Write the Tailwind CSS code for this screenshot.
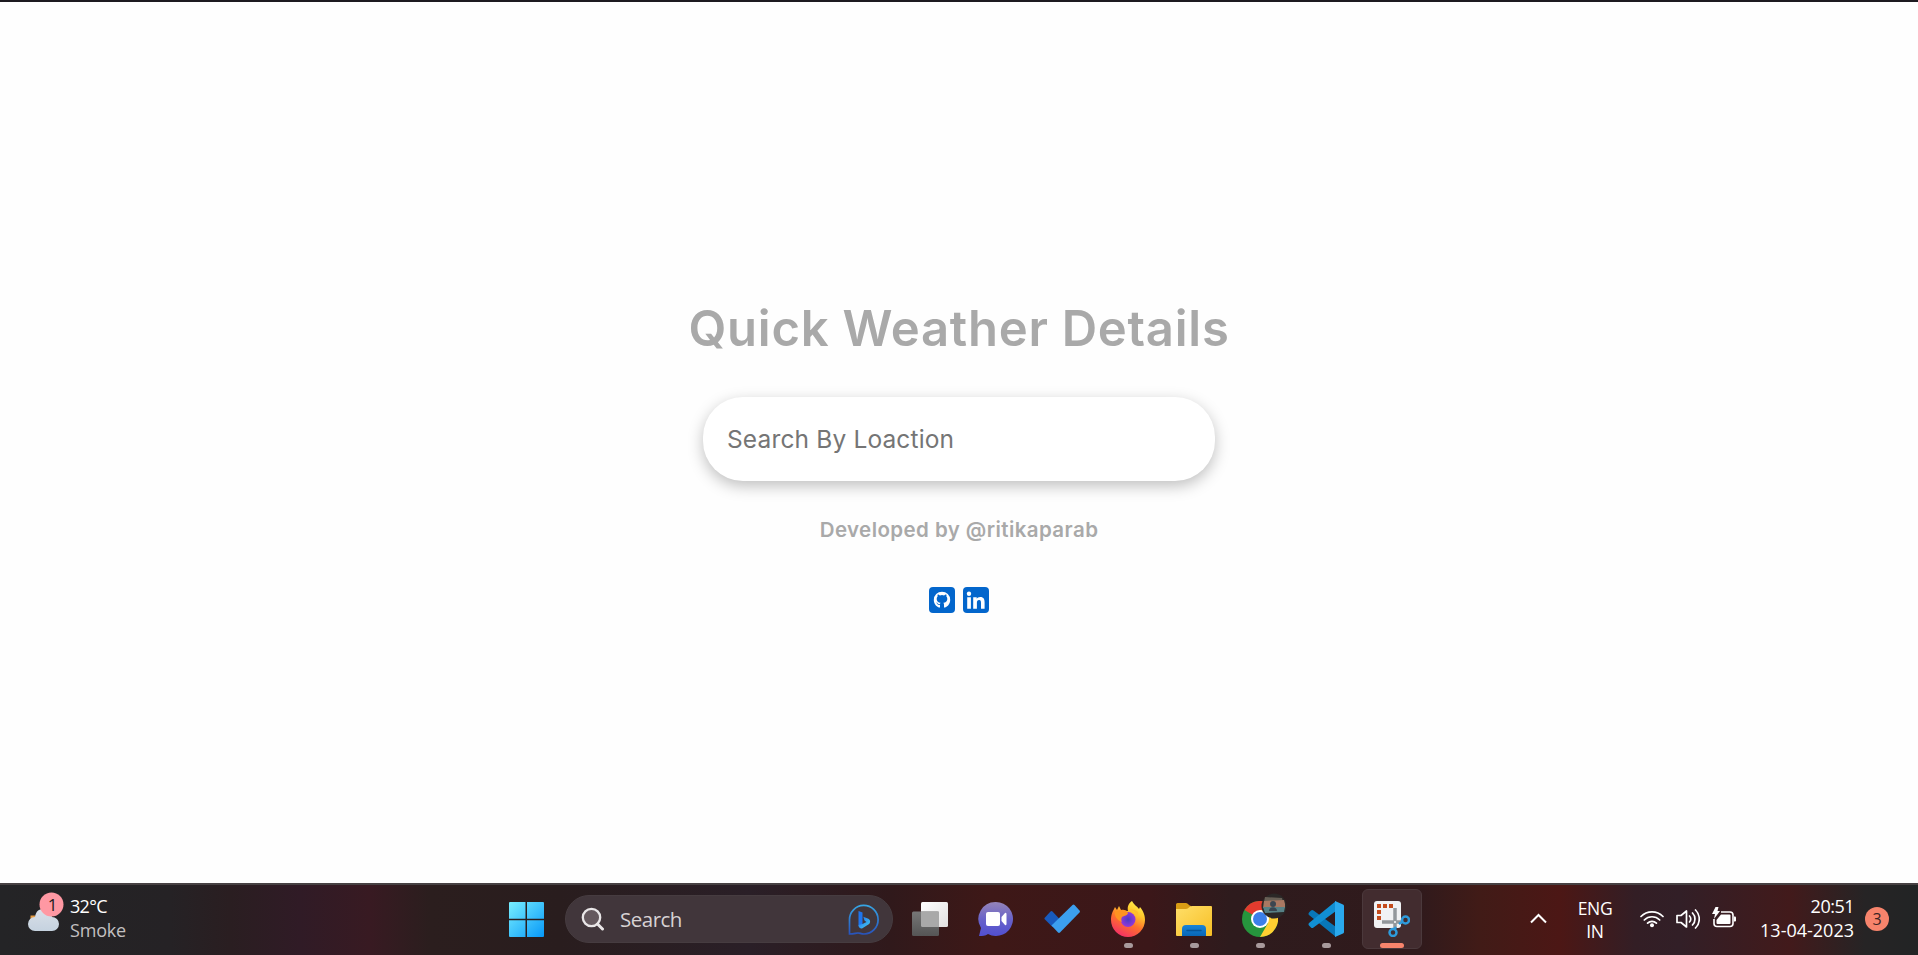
<!DOCTYPE html>
<html lang="en">
<head>
<meta charset="utf-8">
<title>Quick Weather Details</title>
<script src="https://cdn.jsdelivr.net/npm/@tailwindcss/browser@4"></script>
</head>
<body class="flex h-screen flex-col overflow-hidden bg-[#fefefe]">
<main class="flex h-[883px] shrink-0 flex-col items-center border-t-2 border-[#1d1a20] font-[Inter,sans-serif]">
  <h1 class="mt-[297px] h-[60px] whitespace-nowrap text-[49px] leading-[60px] font-semibold tracking-[0.75px] text-[#a9a9a9]">Quick Weather Details</h1>
  <input type="text" placeholder="Search By Loaction" class="mt-[38px] h-[84px] w-[512px] shrink-0 rounded-[40px] bg-white px-6 text-[24.5px] tracking-[0.15px] shadow-[0_5px_15px_rgba(0,0,0,0.25)] outline-none placeholder:text-[#757575]">
  <p class="mt-[35px] h-[28px] whitespace-nowrap text-[20.5px] leading-[28px] font-semibold tracking-[0.42px] text-[#a9a9a9]">Developed by @ritikaparab</p>
  <div class="mt-[43px] flex gap-2">
    <svg class="size-[26px]" viewBox="0 0 26 26"><rect width="26" height="26" rx="4" fill="#0366cc"/><path d="M11 20.900c-2.700-.4-6.200-3.200-6.200-7.700a8.200 8.200 0 0 1 16.400 0c0 4.500-3.500 7.300-6.200 7.700v-3c0-1-.3-1.600-.7-1.900 2-.2 4-1 4-4 0-1-.3-1.700-.9-2.300.2-.7.1-1.500-.1-2-.8 0-1.700.6-2.300 1a7.500 7.500 0 0 0-4 0c-.6-.4-1.500-1-2.300-1-.2.5-.3 1.300-.1 2-.6.6-.9 1.300-.9 2.300 0 3 2 3.800 4 4-.4.300-.6.700-.7 1.300-1.400.5-2-.1-2.600-1-.4-.5-1-.5-.9-.1.900.5 1 2.400 3.500 2.100z" fill="#fff" transform="translate(0 -.3)"/></svg>
    <svg class="size-[26px]" viewBox="0 0 26 26"><rect width="26" height="26" rx="4" fill="#0366cc"/><g fill="#fff"><circle cx="6" cy="6.700" r="2.200"/><path d="M4.200 10.200h3.700v11.600H4.200zM10.200 10.200h3.500v1.600c.7-1.200 1.900-1.900 3.500-1.900 3.700 0 4.400 2.400 4.400 5.500v6.400H18v-5.700c0-1.400-.1-3-1.900-3-1.900 0-2.200 1.400-2.200 2.900v5.800h-3.700z"/></g></svg>
  </div>
</main>

<footer class="flex h-[72px] shrink-0 items-start border-t-2 border-[#474143] bg-[linear-gradient(90deg,#242426_0px,#252225_170px,#2a1e21_230px,#301b26_300px,#381a22_370px,#2b1e1e_430px,#291d1e_560px,#2a1f27_750px,#30191b_890px,#3e1817_990px,#3b1719_1150px,#2e1b1d_1230px,#301a1c_1420px,#411b17_1480px,#4c1715_1560px,#331e25_1635px,#321f27_1680px,#421a1b_1790px,#262425_1865px,#222425_1918px)] font-['Open_Sans',sans-serif] text-white">
  <section class="flex h-[70px] w-[509px] shrink-0 pt-[5px] pl-[27px]">
    <svg class="h-[42px] w-[38px]" viewBox="0 0 38 42"><defs><linearGradient id="cloud" x2="0" y2="1"><stop stop-color="#d9dfe9"/><stop offset="1" stop-color="#c5d2df"/></linearGradient></defs><path d="M3.500 29v-3.500h5v3z" fill="#e59b43"/><path d="M8 41a7 7 0 0 1 0-14c1-6 4-8 8-8 5 0 8 3 9 8a7 7 0 0 1 0 14z" fill="url(#cloud)"/><circle cx="24.500" cy="14.500" r="12" fill="#ff98a3"/><text x="25.500" y="20.500" text-anchor="middle" font-family="Open Sans, sans-serif" font-size="17" fill="#251d20">1</text></svg>
    <div class="pl-[5px] pt-[4px] text-[18px] leading-6"><div class="tracking-[-0.7px]">32°C</div><div class="tracking-[-0.2px] text-[#c3c0c1]">Smoke</div></div>
  </section>
  <svg class="mt-[17px] size-[35px] shrink-0" viewBox="0 0 35 35"><defs><linearGradient id="win" x2="35" y2="35" gradientUnits="userSpaceOnUse"><stop stop-color="#78efff"/><stop offset="1" stop-color="#0798f8"/></linearGradient></defs><path d="M1 0h15.500v16.700H0V1a1 1 0 0 1 1-1zM18 0h16a1 1 0 0 1 1 1v15.700H18zM0 18.300h16.500V35H1a1 1 0 0 1-1-1zM18 18.300h17V34a1 1 0 0 1-1 1H18z" fill="url(#win)"/></svg>
  <div class="mt-[10px] ml-[21px] flex h-12 w-[328px] shrink-0 items-center rounded-full border border-[#463c40] bg-[#41363b] pr-[13px] pl-[15px]">
    <svg class="size-[24px]" viewBox="0 0 24 24" fill="none" stroke="#e9e6e7"><circle cx="10.500" cy="10.500" r="8.700" fill="#65595e" stroke-width="2.300"/><path d="M16.500 17l5 5" stroke-width="3" stroke-linecap="round"/></svg>
    <span class="ml-[15px] text-[20.5px] tracking-[-0.5px] text-[#d7d2d4]">Search</span>
    <svg class="ml-auto size-[31px]" viewBox="0 0 31 31"><defs><linearGradient id="bing" x2="0" y2="1"><stop stop-color="#36a6e5"/><stop offset="1" stop-color="#2853bb"/></linearGradient><linearGradient id="bb" x2="1" y2="1"><stop stop-color="#1d6df2"/><stop offset="1" stop-color="#48d0ed"/></linearGradient></defs><path d="M1.500 30V16A14.300 14.300 0 1 1 16 30c-3 0-4-1-6-1s-4 1-8.500 1z" fill="none" stroke="url(#bing)" stroke-width="1.700"/><path d="M10.500 7l4 1.500v12l-2 3.500c-1-.4-2-1.500-2-3z" fill="#1e75ee"/><path d="M10.500 21l4-1 4-2-2-1.500-1.200-3.800 4.500 1.700c3 1.200 3 4.600.5 6L14 24.500c-1.500.5-3.500-1-3.500-3.500z" fill="url(#bb)"/></svg>
  </div>

  <nav class="ml-1 grid h-[70px] w-[528px] shrink-0 grid-cols-[repeat(8,66px)]">
    <div class="flex flex-col items-center pt-4"><svg class="size-9" viewBox="0 0 36 36"><defs><linearGradient id="tv" x2="1" y2="1"><stop stop-color="#fff"/><stop offset="1" stop-color="#e1e0e0"/></linearGradient><linearGradient id="tvd" x2="0" y2="1"><stop stop-color="#777"/><stop offset="1" stop-color="#555"/></linearGradient></defs><rect x="9" y="1" width="27" height="25" rx="1.500" fill="url(#tv)"/><rect y="10.500" width="27" height="24.500" rx="1.500" fill="url(#tvd)"/><path d="M9 10.500h18V26H10.500A1.500 1.500 0 0 1 9 24.500z" fill="#a9a9a9"/></svg></div>
    <div class="flex flex-col items-center pt-4"><svg class="size-9" viewBox="0 0 36 36"><defs><linearGradient id="chat" x2="0" y2="1"><stop stop-color="#9584b8"/><stop offset=".5" stop-color="#6963c9"/><stop offset="1" stop-color="#514fd0"/></linearGradient></defs><path d="M18 1a17 17 0 1 1-8 32c-3 2-5 2-9 2l2-8A17 17 0 0 1 18 1z" fill="url(#chat)"/><rect x="8" y="11" width="14" height="14" rx="2" fill="#fff"/><path d="M23.500 16l3.500-4a1 1 0 0 1 1.500 1v10a1 1 0 0 1-1.500 1l-3.500-4z" fill="#fff"/></svg></div>
    <div class="flex flex-col items-center pt-4"><svg class="size-9" viewBox="0 0 36 36"><path d="M.5 17l6-6.500a1.500 1.500 0 0 1 2 0l7 7.500-7 8-8-8z" fill="#185abd"/><path d="M7.500 24.500L28.500 4a1.500 1.500 0 0 1 2 0l5 5.500a1.500 1.500 0 0 1 0 2L16 31.500a1.500 1.500 0 0 1-2 0z" fill="#3c9fee"/></svg></div>
    <div class="flex flex-col items-center pt-4"><svg class="size-9" viewBox="0 0 36 36"><defs><linearGradient id="ff" x1=".8" y1="0" x2=".3" y2="1"><stop stop-color="#fff44f"/><stop offset=".3" stop-color="#ffc72c"/><stop offset=".6" stop-color="#ff712b"/><stop offset="1" stop-color="#f32d68"/></linearGradient><radialGradient id="ffp"><stop stop-color="#493bc5"/><stop offset="1" stop-color="#9638d7"/></radialGradient></defs><path d="M22 0c2 4 5 5 7 8l1-2c4 5 5 9 5 13a17 17 0 0 1-34 0c0-6 2-9 4-13l2 3 2-4 2 4 7 1c-1-5 1-8 4-10z" fill="url(#ff)"/><circle cx="18" cy="18.500" r="7.500" fill="url(#ffp)"/><path d="M5 10l6-1c3-1 5 0 7 3 0 2-4 3-6 4-1 2-1 3 0 5-5-2-8-6-7-11z" fill="#ff9321"/><path d="M20 9c4 0 7 4 7 8 2-2 1-5 1-6-2-2-5-3-8-2z" fill="#ffbd2e"/></svg><i class="mt-[6px] h-[5px] w-[9px] rounded-full bg-[#a89a9c]"></i></div>
    <div class="flex flex-col items-center pt-4"><svg class="size-9" viewBox="0 0 36 36"><defs><linearGradient id="fold" x2="1" y2="1"><stop stop-color="#ffdf69"/><stop offset="1" stop-color="#f7bf25"/></linearGradient><linearGradient id="fb" x2="0" y2="1"><stop stop-color="#1784d8"/><stop offset="1" stop-color="#0866b5"/></linearGradient></defs><path d="M0 10V3.500A1.500 1.500 0 0 1 1.500 2H10c2 0 3 3 5 3v5z" fill="#d99d14"/><path d="M0 8h10c3 0 3-3 6-3h19a1 1 0 0 1 1 1v28a1 1 0 0 1-1 1H1a1 1 0 0 1-1-1z" fill="url(#fold)"/><path d="M6 35v-7a4 4 0 0 1 4-4h16a4 4 0 0 1 4 4v7z" fill="url(#fb)"/><path d="M11 29.500h14" stroke="#075597" stroke-width="1.500" stroke-linecap="round"/></svg><i class="mt-[6px] h-[5px] w-[9px] rounded-full bg-[#a89a9c]"></i></div>
    <div class="relative flex flex-col items-center pt-4"><svg class="size-9" viewBox="0 0 36 36"><circle cx="18" cy="18" r="18" fill="#26953d"/><path d="M18 18L2.400 9A18 18 0 0 1 33.600 9H18z" fill="#e33b2e"/><path d="M18 9h15.600A18 18 0 0 1 18 36l7.800-13.500z" fill="#ffcf31"/><path d="M18 18v-9H10.200z" fill="#e33b2e"/><circle cx="18" cy="18" r="9" fill="#fff"/><circle cx="18" cy="18" r="7" fill="#3c7fe9"/></svg><i class="mt-[6px] h-[5px] w-[9px] rounded-full bg-[#a89a9c]"></i>
      <svg class="absolute top-[8px] left-[34px] size-[26px]" viewBox="0 0 26 26"><circle cx="13" cy="13" r="12.500" fill="#2b2827"/><path d="M4 4l17 1 1 4H3z" fill="#685f55"/><path d="M3 8l20-1 1 4v4H2z" fill="#a97862"/><path d="M2 14h22l-1 5-19 1z" fill="#578186"/><circle cx="12" cy="11" r="3" fill="#3c4650"/><path d="M8 18c0-5 8-5 8 0z" fill="#394550"/></svg></div>
    <div class="flex flex-col items-center pt-4"><svg class="size-9" viewBox="0 0 36 36"><path d="M1 11.500l2-2a2 2 0 0 1 2.500 0L28 26v10L1 14a2 2 0 0 1 0-2.500z" fill="#0877b9"/><path d="M1 24.500l2 2a2 2 0 0 0 2.500 0L28 10V0L1 22a2 2 0 0 0 0 2.500z" fill="#118fd3"/><path d="M27 0l8 3.500a2 2 0 0 1 1 2v25a2 2 0 0 1-1 2L27 36z" fill="#2aa9ed"/></svg><i class="mt-[6px] h-[5px] w-[9px] rounded-full bg-[#a89a9c]"></i></div>
    <div class="mt-1 ml-[3px] flex size-[60px] flex-col items-center rounded-md border border-[#4b393c] bg-[#422c2f] pt-[11px]"><svg class="size-9 shrink-0" viewBox="0 0 36 36"><rect width="27" height="27" rx="3" fill="#f0f2f4"/><g fill="#c44b1c"><path d="M3 3h4v4H3zM9 3h4v4H9zM15 3h4v4h-4zM3 9h4v4H3zM3 15h4v4H3z"/></g><path d="M8 21h20M21 7v20" stroke="#92989c" stroke-width="3.500" fill="none"/><circle cx="21" cy="21" r="1" fill="#fff"/><g fill="none" stroke="#2d9bdc" stroke-width="2.500"><path d="M25 23l3-2M22 26l-2 3"/><circle cx="31.500" cy="19" r="3.500"/><circle cx="19" cy="31.500" r="3.500"/></g></svg><i class="mt-[6px] h-[5px] w-6 shrink-0 rounded-full bg-[#f7846c]"></i></div>
  </nav>

  <section class="ml-[105px] flex h-[70px] shrink-0 items-start">
    <svg class="mt-[28px] h-[11px] w-[17px]" viewBox="0 0 17 11" fill="none" stroke="#fff" stroke-width="2"><path d="M1 9.500L8.500 2 16 9.500"/></svg>
    <div class="mt-[12px] ml-[29px] w-[38px] text-center text-[17.5px] leading-[23px] tracking-[-0.3px]">ENG<br>IN</div>
    <svg class="mt-[24px] ml-[26px] h-[20px] w-6" viewBox="0 0 24 20" fill="none" stroke="#fff" stroke-width="1.700" stroke-linecap="round"><path d="M1 7.500a15.500 15.500 0 0 1 22 0M4.300 11a10.800 10.800 0 0 1 15.400 0M7.600 14.200a6.200 6.200 0 0 1 8.800 0"/><circle cx="12" cy="16.300" r="2" fill="#fff" stroke="none"/></svg>
    <svg class="mt-[23px] ml-3 h-[22px] w-6" viewBox="0 0 24 22" fill="none" stroke="#fff" stroke-width="1.700" stroke-linejoin="round" stroke-linecap="round"><path d="M1 7.500h4L10.500 3v16L5 14.500H1z"/><path d="M13.500 8a4.200 4.200 0 0 1 0 6M16.500 5a8.500 8.500 0 0 1 0 12M19.500 2a12.700 12.700 0 0 1 0 18"/></svg>
    <svg class="mt-[22px] ml-3 h-[21px] w-6" viewBox="0 0 24 21"><path d="M9 5h9a3 3 0 0 1 3 3v8.500a3 3 0 0 1-3 3H5a3 3 0 0 1-3-3V12" fill="none" stroke="#fff" stroke-width="1.600"/><path d="M9 7.500h8.500a1 1 0 0 1 1 1v7.500a1 1 0 0 1-1 1h-12a1 1 0 0 1-1-1v-3z" fill="#fff"/><path d="M22 9.500h1a1 1 0 0 1 1 1v3a1 1 0 0 1-1 1h-1z" fill="#fff"/><path d="M3.500 0h3L5.500 4H8L2 12l1-5H0z" fill="#fff"/></svg>
    <div class="mt-[9px] ml-[13px] w-[105px] text-right text-[18px] leading-6"><div class="tracking-[-0.5px]">20:51</div><div>13-04-2023</div></div>
    <div class="mt-[22px] ml-[11px] flex size-6 items-center justify-center rounded-full bg-[#f7846c] text-[16px] text-[#3a2424]">3</div>
  </section>
</footer>
</body>
</html>
